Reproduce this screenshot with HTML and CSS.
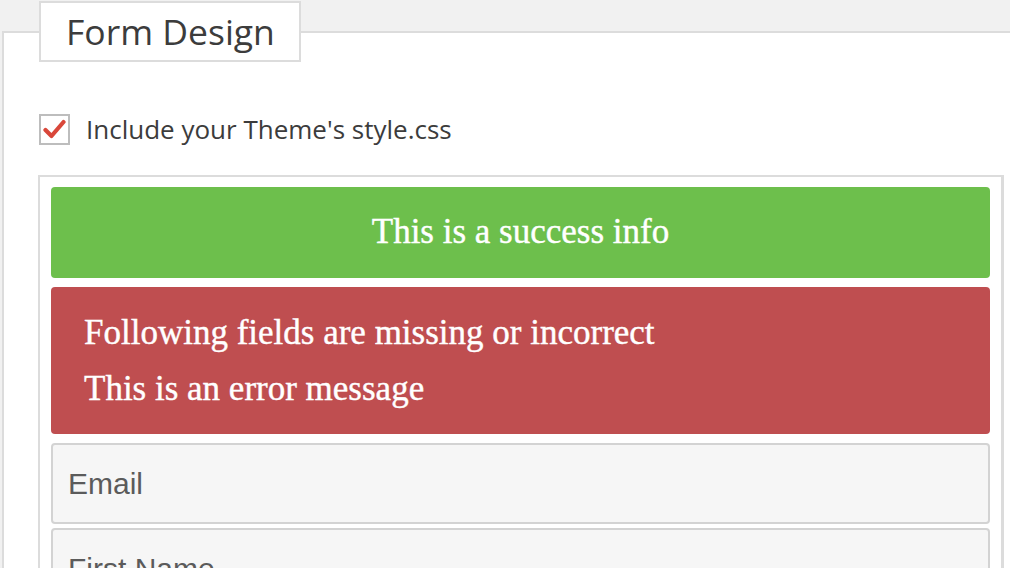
FILE: index.html
```html
<!DOCTYPE html>
<html>
<head>
<meta charset="utf-8">
<link rel="stylesheet" href="styles.css">
</head>
<body>
<div class="page">
  <div class="panel">
    <div class="legend">Form Design</div>
    <label class="check-row">
      <span class="checkbox">
        <svg width="23" height="21" viewBox="0 0 23 21"><path d="M2.5 11 L8.5 17 L20.5 3" fill="none" stroke="#d9473a" stroke-width="4.2" stroke-linecap="round" stroke-linejoin="round"/></svg>
      </span>
      <span class="check-label">Include your Theme's style.css</span>
    </label>
    <div class="preview">
      <div class="alert success">This is a success info</div>
      <div class="alert error">
        <p>Following fields are missing or incorrect</p>
        <p>This is an error message</p>
      </div>
      <div class="field">Email</div>
      <div class="field">First Name</div>
    </div>
  </div>
</div>
</body>
</html>
```

FILE: styles.css
```css
html, body {
  margin: 0;
  padding: 0;
  background: #f1f1f1;
  height: 100%;
  overflow: hidden;
}
.page {
  padding: 31px 0 0 2px;
}
.panel {
  background: #fff;
  border-top: 2px solid #dcdcdc;
  border-left: 2px solid #dcdcdc;
  padding: 0 0 0 34px;
  min-height: 600px;
}
.legend {
  display: block;
  width: fit-content;
  margin: -32px 0 0 1px;
  background: #fff;
  border: 2px solid #dcdcdc;
  padding: 0 24px 0 25px;
  height: 57px;
  line-height: 57px;
  font-family: "Open Sans", sans-serif;
  font-size: 35.5px;
  color: #3c3c3c;
}
.check-row {
  display: flex;
  align-items: center;
  margin-top: 49px;
  margin-left: 1px;
}
.checkbox {
  width: 27px;
  height: 27px;
  border: 2px solid #bdbdbd;
  display: flex;
  align-items: center;
  justify-content: center;
}
.check-label {
  margin-left: 16px;
  font-family: "Open Sans", sans-serif;
  font-size: 26px;
  color: #3c3c3c;
}
.preview {
  margin-top: 28px;
  width: 939px;
  border: 2px solid #dcdcdc;
  border-right-width: 3px;
  padding: 10px 11px;
}
.alert {
  border-radius: 4px;
  color: #fff;
  font-family: "Liberation Serif", "Times New Roman", serif;
  font-size: 35px;
  -webkit-text-stroke: 0.4px #fff;
}
.success {
  background: #6dbf4c;
  height: 91px;
  line-height: 90px;
  text-align: center;
}
.error {
  background: #bf4e50;
  margin-top: 9px;
  padding: 18px 33px 17px;
}
.error p {
  margin: 0;
  line-height: 56px;
}
.field {
  margin-top: 9px;
  height: 77px;
  background: #f6f6f6;
  border: 2px solid #d3d3d3;
  border-radius: 4px;
  padding: 0 15px;
  line-height: 78px;
  font-family: "Liberation Sans", Arial, sans-serif;
  font-size: 30px;
  color: #5b5b5b;
}
.field + .field {
  margin-top: 4px;
}
```
